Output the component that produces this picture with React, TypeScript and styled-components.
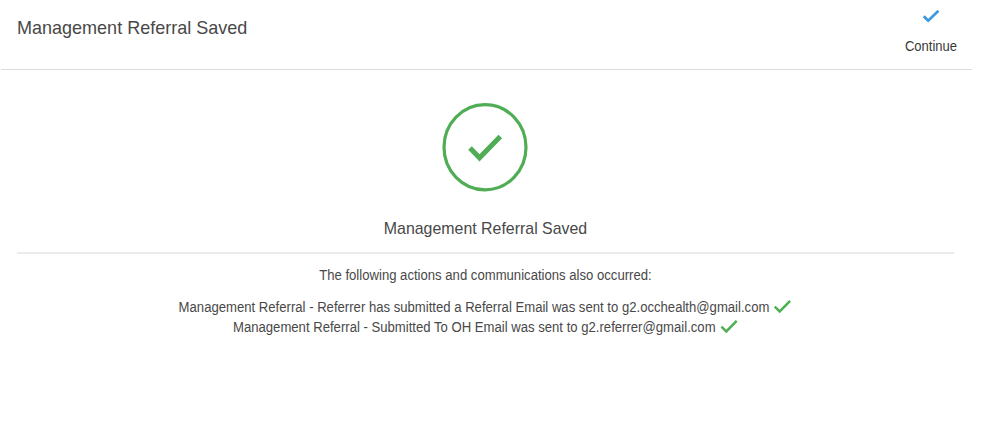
import React from "react";
import styled, { createGlobalStyle } from "styled-components";

const GlobalStyle = createGlobalStyle`
  * { box-sizing: border-box; }
  body {
    margin: 0;
    background: #fff;
    color: #484848;
    font-family: "Liberation Sans", Arial, sans-serif;
  }
`;

const Page = styled.main`
  width: 981px;
  height: 428px;
  padding: 0 9px 0 1px;
  overflow: hidden;
`;

const Header = styled.header`
  display: flex;
  justify-content: space-between;
  align-items: flex-start;
  height: 70px;
  padding: 0 14px 0 16px;
  border-bottom: 1px solid #dcdcdc;
`;

const Text = styled.span<{ $size: number; $line: number; $scale?: number; $align?: string }>`
  display: block;
  font-size: ${(p) => p.$size}px;
  line-height: ${(p) => p.$line}px;
  white-space: nowrap;
  transform: scaleX(${(p) => p.$scale ?? 1});
  transform-origin: ${(p) => p.$align ?? "center"};
`;

const Title = styled.h1`
  margin: 17px 0 0;
  font-weight: 400;
`;

const ContinueButton = styled.button`
  display: flex;
  flex-direction: column;
  align-items: center;
  width: 54px;
  margin: 10px 0 0;
  padding: 0;
  border: 0;
  background: none;
  color: #383838;
  font-family: inherit;
  gap: 15px;
`;

const Body = styled.section`
  display: flex;
  flex-direction: column;
  align-items: center;
  margin: 0 18px 0 16px;
`;

const Badge = styled.svg`
  display: block;
  width: 86px;
  height: 90px;
  margin: 32px 1px 0 0;
`;

const Heading = styled.h2`
  width: 100%;
  height: 62px;
  margin: 0;
  padding-top: 27px;
  border-bottom: 2px solid #ebebeb;
  font-weight: 400;
  text-align: center;
`;

const Intro = styled.p`
  margin: 11px 0 12px;
`;

const List = styled.ul`
  display: flex;
  flex-direction: column;
  align-items: center;
  margin: 0;
  padding: 0;
  list-style: none;
`;

const Item = styled.li`
  display: flex;
  justify-content: center;
  align-items: center;
  gap: 5px;
  height: 20px;
  transform: scaleX(0.937);
`;

const Tick = styled.svg<{ $w: number; $h: number }>`
  display: block;
  flex: none;
  width: ${(p) => p.$w}px;
  height: ${(p) => p.$h}px;
`;

const messages = [
  "Management Referral - Referrer has submitted a Referral Email was sent to g2.occhealth@gmail.com",
  "Management Referral - Submitted To OH Email was sent to g2.referrer@gmail.com",
];

export default function App() {
  return (
    <>
      <GlobalStyle />
      <Page>
        <Header>
          <Title>
            <Text $size={19} $line={22} $scale={0.948} $align="left">Management Referral Saved</Text>
          </Title>
          <ContinueButton type="button">
            <Tick $w={17} $h={13} viewBox="0 0 17 13" fill="none" stroke="#3a98e0" strokeWidth="2.7">
              <path d="M0.8 6.3 L5.2 10.6 L15.4 0.8" />
            </Tick>
            <Text $size={14} $line={17} $scale={0.93}>Continue</Text>
          </ContinueButton>
        </Header>
        <Body>
          <Badge viewBox="0 0 86 90" fill="none" stroke="#50ad55">
            <ellipse cx="43" cy="45.2" rx="41" ry="42.6" strokeWidth="3.2" />
            <path d="M28 46 L37.5 55.8 L58.3 34.4" strokeWidth="5" />
          </Badge>
          <Heading>
            <Text $size={17} $line={20} $scale={0.936}>Management Referral Saved</Text>
          </Heading>
          <Intro>
            <Text $size={14} $line={20} $scale={0.937}>The following actions and communications also occurred:</Text>
          </Intro>
          <List>
            {messages.map((message) => (
              <Item key={message}>
                <Text $size={14} $line={20}>{message}</Text>
                <Tick $w={19} $h={14} viewBox="0 0 19 14" fill="none" stroke="#4caf50" strokeWidth="2.6">
                  <path d="M1.2 6.6 L6.5 11.4 L17.6 0.9" />
                </Tick>
              </Item>
            ))}
          </List>
        </Body>
      </Page>
    </>
  );
}
